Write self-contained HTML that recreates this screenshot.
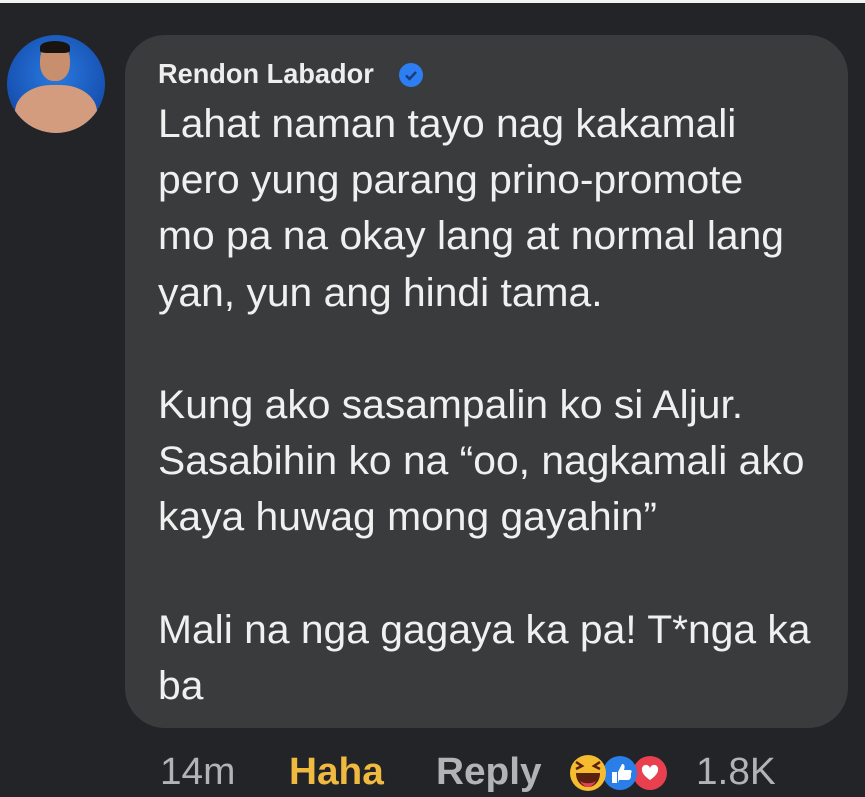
<!DOCTYPE html>
<html><head><style>
body{margin:0;width:865px;height:797px;background:#232427;overflow:hidden;font-family:"Liberation Sans",sans-serif;position:relative}
.top{position:absolute;left:0;top:0;width:865px;height:3px;background:#f2f2f2}
.av{position:absolute;left:7px;top:35px;width:98px;height:98px;border-radius:50%;background:radial-gradient(circle at 50% 40%,#2a7ae0,#0d3e9c);overflow:hidden}
.head{position:absolute;left:33px;top:8px;width:30px;height:38px;border-radius:45%;background:#c88f6e}
.hair{position:absolute;left:33px;top:6px;width:30px;height:12px;border-radius:50% 50% 20% 20%;background:#1a1410}
.body{position:absolute;left:8px;top:50px;width:82px;height:60px;border-radius:45% 45% 0 0;background:#d39c7e}
.bub{position:absolute;left:125px;top:35px;width:723px;height:693px;background:#3a3b3d;border-radius:40px}
.name{position:absolute;left:158px;top:58px;font-size:28px;font-weight:bold;color:#eee;transform:scaleX(.97);transform-origin:left}
.chk{position:absolute;left:399px;top:63px;width:24px;height:24px;border-radius:50%;background:#2d7ef2}
.txt{position:absolute;left:158px;top:96px;font-size:40px;line-height:56.2px;color:#f0f0f0;white-space:pre;transform:scaleX(1.02);transform-origin:left}
.ft{position:absolute;top:751px;font-size:38px;color:#b0b3b8;transform:scaleX(1.02);transform-origin:left}
</style></head><body>
<div class="top"></div>
<div class="av"><div class="body"></div><div class="head"></div><div class="hair"></div></div>
<div class="bub"></div>
<div class="name">Rendon Labador</div>
<div class="chk"><svg width="24" height="24"><path d="M7 12.5l3.5 3.5 6.5-7" stroke="#1a3d7a" stroke-width="2.5" fill="none"/></svg></div>
<div class="txt">Lahat naman tayo nag kakamali
pero yung parang prino-promote
mo pa na okay lang at normal lang
yan, yun ang hindi tama.

Kung ako sasampalin ko si Aljur.
Sasabihin ko na “oo, nagkamali ako
kaya huwag mong gayahin”

Mali na nga gagaya ka pa! T*nga ka
ba</div>
<div class="ft" style="left:160px">14m</div>
<div class="ft" style="left:289px;color:#f0b940;font-weight:bold">Haha</div>
<div class="ft" style="left:436px;font-weight:bold">Reply</div>
<svg style="position:absolute;left:566px;top:753px" width="120" height="40">
<circle cx="84" cy="20" r="17" fill="#e8404f"/><path d="M76 17a4 4 0 0 1 8-2a4 4 0 0 1 8 2c0 5-8 10-8 10s-8-5-8-10z" fill="#fff"/>
<circle cx="54" cy="20" r="17" fill="#2a7ee8"/><path d="M46 19h5v11h-5zM52 30V19l4-8c3 0 3 3 2 6h6c2 0 2 2 1 3v3c0 2-1 4-3 4h-9z" fill="#fff"/>
<circle cx="22" cy="20" r="18" fill="#f5bc30"/><path d="M10 20h24c0 8-5 14-12 14s-12-6-12-14z" fill="#5a2010"/><path d="M14 28c4 3 12 3 16 0c-2 4-6 6-8 6s-6-2-8-6z" fill="#e8405a"/><path d="M10 9l6 4-6 3M34 9l-6 4 6 3" stroke="#5a2010" stroke-width="2.5" fill="none"/>
</svg>
<div class="ft" style="left:696px">1.8K</div>
</body></html>
